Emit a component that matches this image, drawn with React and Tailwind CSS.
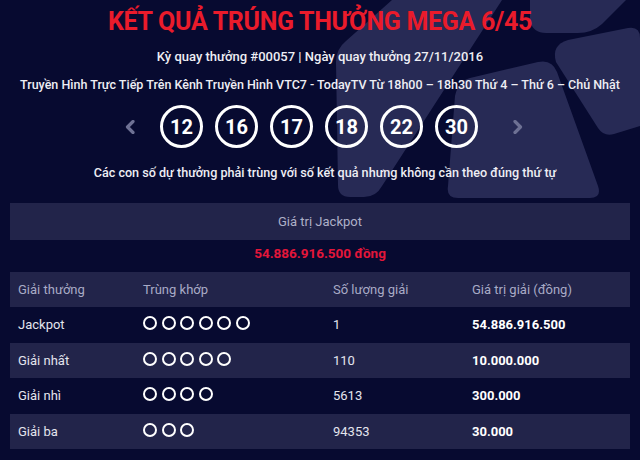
import React from "react";

const balls = ["12", "16", "17", "18", "22", "30"];
const rows = [
  { name: "Jackpot", n: 6, qty: "1", val: "54.886.916.500" },
  { name: "Giải nhất", n: 5, qty: "110", val: "10.000.000" },
  { name: "Giải nhì", n: 4, qty: "5613", val: "300.000" },
  { name: "Giải ba", n: 3, qty: "94353", val: "30.000" },
];

function Chevron({ dir }) {
  return (
    <svg width="10" height="14" viewBox="0 0 10 14" className="shrink-0">
      {dir === "left" ? (
        <polyline points="8,1.5 2.5,7 8,12.5" fill="none" stroke="#6e7194" strokeWidth="3.2" strokeLinecap="round" strokeLinejoin="round" />
      ) : (
        <polyline points="2,1.5 7.5,7 2,12.5" fill="none" stroke="#6e7194" strokeWidth="3.2" strokeLinecap="round" strokeLinejoin="round" />
      )}
    </svg>
  );
}

export default function App() {
  return (
    <div className="relative w-[640px] h-[460px] overflow-hidden bg-[#070a30] font-['Roboto',sans-serif]">
      <svg className="absolute inset-0" width="640" height="460" viewBox="0 0 640 460">
        <g fill="#272a55">
          <path d="M392,0 L502,0 L382,186 Q376,197 364,197 L350,197 Q338,197 338,185 L336,62 Q336,49 346,41 Z" />
          <path d="M470,78 L538,62 Q552,59 557,72 L598,186 Q602,198 590,198 L458,198 Q446,198 448,186 L455,96 Q458,81 470,78 Z" />
          <path d="M568,40 L628,28 Q640,26 640,38 L640,126 L614,134 Q604,137 598,128 L556,62 Q551,45 568,40 Z" />
          <path d="M530,0 L626,0 L602,24 Q592,33 578,33 L546,33 Q533,33 530,21 Z" />
        </g>
      </svg>

      <div className="relative flex flex-col items-center">
        <h1 className="mt-[7px] h-[30px] leading-[30px] text-[25px] font-bold text-[#ea1b2b] tracking-[-0.3px]">
          KẾT QUẢ TRÚNG THƯỞNG MEGA 6/45
        </h1>
        <p className="mt-[11px] h-[18px] leading-[18px] text-[13px] font-medium text-[#eeeef4]">
          Kỳ quay thưởng #00057 | Ngày quay thưởng 27/11/2016
        </p>
        <p className="mt-[10px] h-[18px] leading-[18px] text-[12.5px] font-medium text-[#eeeef4] whitespace-nowrap">
          Truyền Hình Trực Tiếp Trên Kênh Truyền Hình VTC7 - TodayTV Từ 18h00 – 18h30 Thứ 4 – Thứ 6 – Chủ Nhật
        </p>
        <div className="mt-[11px] w-full flex items-center pl-[125px]">
          <Chevron dir="left" />
          <div className="ml-[25px] flex gap-[12px]">
            {balls.map((b) => (
              <div key={b} className="w-[43px] h-[43px] rounded-full border-[3px] border-white flex items-center justify-center text-[20px] font-bold text-white">
                {b}
              </div>
            ))}
          </div>
          <div className="ml-[35px]">
            <Chevron dir="right" />
          </div>
        </div>
        <p className="mt-[16px] ml-[10px] h-[18px] leading-[18px] text-[12.6px] font-medium text-[#eeeef4] whitespace-nowrap">
          Các con số dự thưởng phải trùng với số kết quả nhưng không cần theo đúng thứ tự
        </p>
      </div>

      <div className="relative mt-[21px] px-[10px]">
        <div className="h-[37px] bg-[#22244a] flex items-center justify-center text-[13px] text-[#aeb0c8]">
          Giá trị Jackpot
        </div>
        <div className="h-[32px] flex items-center justify-center pb-[6px] text-[13.5px] font-bold text-[#e3163a]">
          54.886.916.500 đồng
        </div>
        <div className="h-[35px] bg-[#22244a] grid grid-cols-[125px_190px_139px_1fr] items-center pl-[8px] text-[13px] text-[#a9abc6]">
          <div>Giải thưởng</div>
          <div>Trùng khớp</div>
          <div>Số lượng giải</div>
          <div>Giá trị giải (đồng)</div>
        </div>
        {rows.map((r, i) => (
          <div
            key={r.name}
            className={`h-[35.5px] grid grid-cols-[125px_190px_139px_1fr] items-center pl-[8px] text-[13px] ${i % 2 === 1 ? "bg-[#22244a]" : "bg-[#070a30]"}`}
          >
            <div className="text-[#e4e5ee]">{r.name}</div>
            <div className="flex gap-[4.5px] pb-[3px]">
              {Array.from({ length: r.n }).map((_, k) => (
                <div key={k} className="w-[14px] h-[14px] rounded-full border-[2.5px] border-white" />
              ))}
            </div>
            <div className="text-[#e4e5ee]">{r.qty}</div>
            <div className="font-bold text-white">{r.val}</div>
          </div>
        ))}
      </div>
    </div>
  );
}
